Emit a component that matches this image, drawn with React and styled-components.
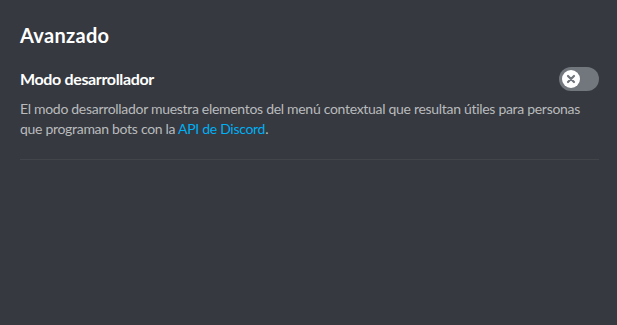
import React, { useState } from "react";
import styled, { createGlobalStyle } from "styled-components";

const GlobalStyle = createGlobalStyle`
  html, body {
    margin: 0;
    padding: 0;
    background: #36393f;
  }
`;

const Page = styled.div`
  width: 617px;
  height: 325px;
  box-sizing: border-box;
  padding: 20px 18px 0 20px;
  background: #36393f;
  font-family: Lato, "Noto Sans", sans-serif;
`;

const Title = styled.h2`
  margin: 0 0 17px;
  font-size: 20px;
  line-height: 30px;
  font-weight: 700;
  letter-spacing: 0.3px;
  color: #fff;
`;

const Row = styled.div`
  display: flex;
  align-items: center;
  justify-content: space-between;
`;

const Label = styled.div`
  font-size: 16px;
  line-height: 24px;
  font-weight: 700;
  letter-spacing: -0.35px;
  color: #fff;
`;

const Toggle = styled.button`
  width: 40px;
  height: 24px;
  border: none;
  border-radius: 12px;
  background: ${(p) => (p.on ? "#3ba55c" : "#72767d")};
  cursor: pointer;
  display: flex;
  align-items: center;
  justify-content: ${(p) => (p.on ? "flex-end" : "flex-start")};
  padding: 0 3px;
`;

const Knob = styled.span`
  width: 18px;
  height: 18px;
  border-radius: 50%;
  background: #fff;
  display: flex;
  align-items: center;
  justify-content: center;
`;

const Description = styled.p`
  margin: 8px 0 0;
  font-size: 14px;
  line-height: 20px;
  letter-spacing: -0.3px;
  color: #b9bbbe;
`;

const Link = styled.a`
  color: #00aff4;
  text-decoration: none;
`;

const Divider = styled.div`
  margin-top: 20px;
  height: 1px;
  background: #42454a;
`;

export default function App() {
  const [on, setOn] = useState(false);
  return (
    <>
      <GlobalStyle />
      <Page>
        <Title>Avanzado</Title>
        <Row>
          <Label>Modo desarrollador</Label>
          <Toggle on={on ? 1 : 0} onClick={() => setOn(!on)}>
            <Knob>
              <svg width="10" height="10" viewBox="0 0 10 10">
                <path
                  d="M2 2 L8 8 M8 2 L2 8"
                  stroke="#72767d"
                  strokeWidth="2.2"
                  strokeLinecap="round"
                />
              </svg>
            </Knob>
          </Toggle>
        </Row>
        <Description>
          El modo desarrollador muestra elementos del menú contextual que resultan útiles para personas
          que programan bots con la <Link href="#">API de Discord</Link>.
        </Description>
        <Divider />
      </Page>
    </>
  );
}
